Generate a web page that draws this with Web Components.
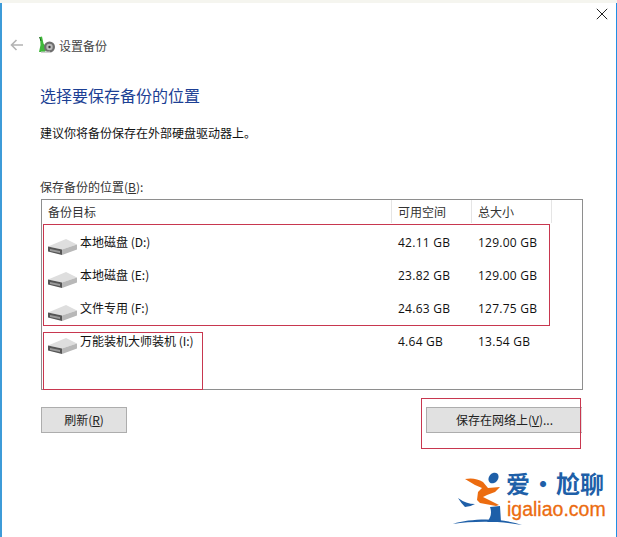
<!DOCTYPE html>
<html lang="zh-CN"><head><meta charset="utf-8"><title>设置备份</title>
<style>
html,body{margin:0;padding:0;background:#fff;overflow:hidden}
body{font:12px "Noto Sans CJK SC","Noto Sans",sans-serif;color:#222}
</style></head><body>
<wizard-window>
  <nav-bar slot="nav">设置备份</nav-bar>
  <h-title slot="title">选择要保存备份的位置</h-title>
  <span slot="hint">建议你将备份保存在外部硬盘驱动器上。</span>
  <span slot="label">保存备份的位置(<u>B</u>):</span>
  <drive-table slot="table">
    <drive-row name="本地磁盘 (D:)" free="42.11 GB" total="129.00 GB"></drive-row>
    <drive-row name="本地磁盘 (E:)" free="23.82 GB" total="129.00 GB"></drive-row>
    <drive-row name="文件专用 (F:)" free="24.63 GB" total="127.75 GB"></drive-row>
    <drive-row name="万能装机大师装机 (I:)" free="4.64 GB" total="13.54 GB"></drive-row>
  </drive-table>
  <win-button slot="left" style="width:86px">刷新(<u>R</u>)</win-button>
  <win-button slot="right" style="width:156px" noright>保存在网络上(<u>V</u>)...</win-button>
  <red-box slot="marks" style="left:43px;top:224px;width:507px;height:102px"></red-box>
  <red-box slot="marks" style="left:43px;top:332px;width:160px;height:58px"></red-box>
  <red-box slot="marks" style="left:421px;top:398px;width:160px;height:51px"></red-box>
  <brand-logo slot="marks"></brand-logo>
</wizard-window>
<script>
function def(name, css, html){
  customElements.define(name, class extends HTMLElement{
    constructor(){super();this.attachShadow({mode:'open'}).innerHTML='<style>'+css+'</style>'+(typeof html==='function'?'':html);}
    connectedCallback(){ if(typeof html==='function') this.shadowRoot.innerHTML='<style>'+css+'</style>'+html(this); }
  });
}
def('wizard-window',`
:host{display:block;position:relative;width:617px;height:537px;box-sizing:border-box;background:#fff;overflow:hidden}
.top{height:3px;background:#f5f5ef}
.edge{display:flex;height:534px}
.l{width:2px;background:#3d9bd8;flex:none}
.r{width:1px;background:#1f8fe6;flex:none}
.main{flex:1;min-width:0;display:flex;flex-direction:column}
.close{align-self:flex-end;margin:5px 8px 0 0;height:12px;width:12px;display:block}
.body{padding:0 0 0 38px;display:flex;flex-direction:column}
.hint{margin-top:17px;line-height:18px;color:#111}
.label{margin-top:36px;line-height:18px;color:#333}
.buttons{display:flex;justify-content:space-between;margin:17px 34px 0 1px}
`,`<div class="top"></div><div class="edge"><div class="l"></div><div class="main">
<svg class="close" viewBox="0 0 12 12"><path d="M.8.8l10.400 10.400M11.200.8L.8 11.200" stroke="#222" stroke-width="1" fill="none"/></svg>
<slot name="nav"></slot>
<div class="body"><slot name="title"></slot>
<div class="hint"><slot name="hint"></slot></div>
<div class="label"><slot name="label"></slot></div>
<slot name="table"></slot>
<div class="buttons"><slot name="left"></slot><slot name="right"></slot></div></div>
</div><div class="r"></div></div><slot name="marks"></slot>`);
def('nav-bar',`
:host{display:flex;align-items:center;height:24px;margin-top:13px;padding-left:8px;color:#444;font-size:12px}
.back{width:13px;height:12px;margin-right:15px}
.ico{width:17px;height:18px;margin-right:4px}
`,`<svg class="back" viewBox="0 0 13 12"><path d="M13 6H1.500M6.500 1L1.500 6l5 5" fill="none" stroke="#b3b3b3" stroke-width="1.600"/></svg>
<svg class="ico" viewBox="0 0 17 18"><path d="M2 1l2-.5 1.500 7L9 12l-2 4H1l1.500-7z" fill="#3fb93a"/><path d="M1.500 1l1.500 4" stroke="#1c6b1c" stroke-width="1" fill="none"/><circle cx="11.500" cy="11" r="5.500" fill="#6f6f6f"/><circle cx="11.500" cy="11" r="3.200" fill="#b9b9b9"/><circle cx="11.500" cy="11" r="1.200" fill="#3a3a3a"/><path d="M3 15.500h9v1.500H3z" fill="#d0d0d0"/></svg><slot></slot>`);
def('h-title',`:host{display:block;margin-top:26px;font-size:16px;line-height:24px;color:#1c3f94}`,`<slot></slot>`);
def('drive-table',`
:host{display:block;box-sizing:border-box;width:542px;height:191px;margin:3px 0 0 1px;border:1px solid #8e8e8e;background:#fff}
.head{display:flex;height:23px;width:510px;align-items:center;color:#333}
.c{box-sizing:border-box;height:100%;border-right:1px solid #e5e5e5;padding-left:6px;line-height:23px}
.a{width:350px}.b{width:80px}.d{width:80px}
.rows{padding-top:1px}
`,`<div class="head"><div class="c a">备份目标</div><div class="c b">可用空间</div><div class="c d">总大小</div></div><div class="rows"><slot></slot></div>`);
def('drive-row',`
:host{display:flex;height:33px;color:#111;width:510px}
.n{width:350px;box-sizing:border-box;display:flex;padding-left:6px;align-items:flex-start}
svg{width:29px;height:18px;margin-top:14px;flex:none}
.t{margin:0 0 0 3px;line-height:18px;padding-top:9px;white-space:nowrap}
.v{width:80px;box-sizing:border-box;padding-left:6px;line-height:18px;padding-top:10px;white-space:nowrap;letter-spacing:.25px;font-family:"Open Sans","Noto Sans CJK SC",sans-serif}
`,e=>`<div class="n"><svg viewBox="0 0 29 18"><path d="M0 8.500L18 1l11 5.500-15 5z" fill="#dedede"/><path d="M0 8.500l14 3V17L0 13.500z" fill="#555"/><path d="M2 11l10 2v2L2 13z" fill="#9a9a9a"/><path d="M14 11.500l15-5v5L14 17z" fill="#b8b8b8"/></svg><div class="t">${e.getAttribute('name')}</div></div><div class="v">${e.getAttribute('free')}</div><div class="v">${e.getAttribute('total')}</div>`);
def('win-button',`
:host{display:flex;box-sizing:border-box;height:26px;padding-bottom:1px;align-items:center;justify-content:center;background:#e1e1e1;border:1px solid #adadad;color:#222;font-size:12px}
:host([noright]){border-right:0}
`,`<slot></slot>`);
def('red-box',`:host{display:block;position:absolute;box-sizing:border-box;border:1px solid #c8374f;pointer-events:none}`,``);
def('brand-logo',`
:host{display:block;position:absolute;left:452px;top:472px;width:160px;height:56px}
svg{position:absolute;left:0;top:0;width:72px;height:56px}
.cn{position:absolute;left:54px;top:-2px;font:700 24px/26px "Noto Sans CJK SC",sans-serif;color:#1e5fa8;white-space:nowrap;word-spacing:-4.500px}
.en{position:absolute;left:55px;top:27px;font:400 19.500px/20px "Liberation Sans",sans-serif;color:#ec6c10;white-space:nowrap;-webkit-text-stroke:.3px #ec6c10}
`,`<svg viewBox="0 0 72 56"><ellipse cx="41.500" cy="6" rx="4.500" ry="5.800" transform="rotate(40 41.500 6)" fill="#1e5fa8"/><path d="M13 7Q23 5 31 10L36 16 48 15 43 20 35 23 31 25 47 33 44 34 28 31 25 28 26 20 30 16 23 13z" fill="#ec6c10"/><path d="M6 26Q14 32 23 32 18 35 13 35 9 31 6 26z" fill="#1e5fa8"/><path d="M38 35L48 34 49 50 35 50Q41 43 38 35z" fill="#1e5fa8"/><path d="M1 52C20 46 50 46 70 53 50 49 20 49 1 52z" fill="#1e5fa8"/></svg><div class="cn">爱 · 尬聊</div><div class="en">igaliao.com</div>`);
</script>
</body></html>
